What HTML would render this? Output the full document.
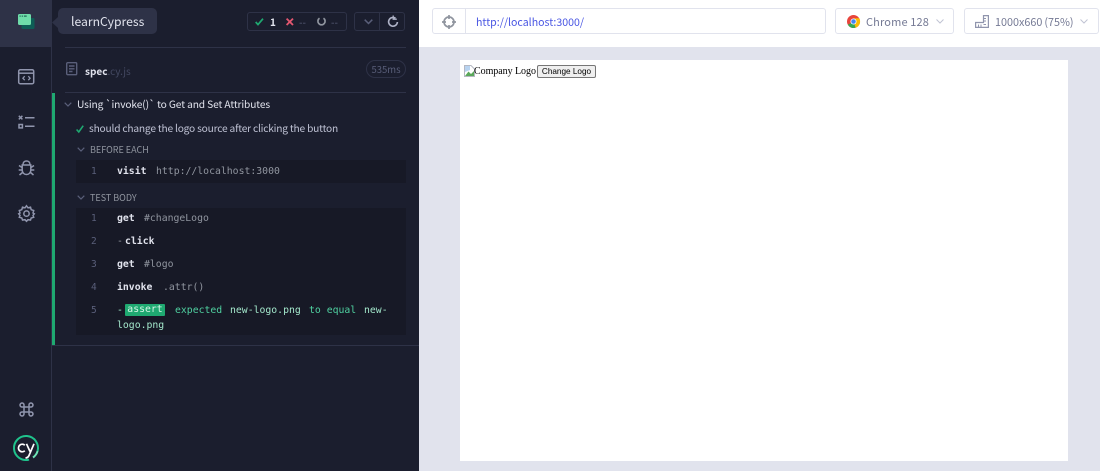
<!DOCTYPE html>
<html><head><meta charset="utf-8"><style>
html,body{margin:0;padding:0;width:1100px;height:471px;overflow:hidden;background:#fff}
*{box-sizing:border-box}
.a{position:absolute;white-space:nowrap}
body{font-family:"Noto Sans CJK SC","Liberation Sans",sans-serif;font-size:10.5px;position:relative}
.m{font-family:"DejaVu Sans Mono","Liberation Mono",monospace;font-size:9.8px;line-height:14px}
.b{font-weight:bold;color:#e1e3ed}
.g{color:#90959f}
.n{color:#5a5f7a;font-size:9.5px}
.gr{color:#a3e7cb}
svg{position:absolute;overflow:visible}
</style></head><body>
<!-- panels -->
<div class="a" style="left:0;top:0;width:419px;height:471px;background:#1b1e2e"></div>
<div class="a" style="left:0;top:0;width:52px;height:47px;background:#2e3247"></div>
<div class="a" style="left:51px;top:0;width:1px;height:471px;background:#2e3247"></div>
<div class="a" style="left:419px;top:47px;width:681px;height:424px;background:#e1e3ed"></div>
<div class="a" style="left:460px;top:60px;width:608px;height:401px;background:#fff"></div>

<!-- sidebar icons -->
<svg style="left:18px;top:14px" width="17" height="16"><rect x="3.5" y="4" width="13" height="11" rx="1.5" fill="#0e5d56"/><rect x="0" y="0" width="13" height="11" rx="1.5" fill="#6fdcaa"/><path d="M1.5 1.5h1.2v1.2h-1.2zM3.700 1.500h1.200v1.200h-1.200zM5.900 1.500h2.800v1.200h-2.800z" fill="#1f6b58"/></svg>
<svg style="left:18px;top:69px" width="17" height="16" fill="none" stroke="#9095ad" stroke-width="1.5"><rect x=".7" y=".7" width="15" height="14" rx="1.5"/><path d="M1 4.2H16"/><path d="M6.7 7.2L4.9 9.2 6.700 11.2M10.300 7.200L12.100 9.200 10.300 11.200" stroke-width="1.3"/></svg>
<svg style="left:18px;top:115px" width="17" height="16" fill="none" stroke="#9095ad" stroke-width="1.5"><path d="M.8 .8L4.400 4.400M4.400 .8L.8 4.400"/><rect x="1" y="9.500" width="3.400" height="3.400"/><path d="M7 2.700H16.500M7 11.200H16.500"/></svg>
<svg style="left:18px;top:159px" width="17" height="18" fill="none" stroke="#9095ad" stroke-width="1.5"><path d="M5 5.500C5 .8 12 .8 12 5.500"/><path d="M4.200 6H12.800V11C12.800 17 4.200 17 4.200 11Z"/><path d="M4 8.500L1 6.500M13 8.500L16 6.500M4 11H.7M13 11H16.300M4.500 13.500L1.500 16M12.500 13.500L15.500 16"/></svg>
<svg style="left:18px;top:205px" width="17" height="17" fill="none" stroke="#9095ad" stroke-width="1.5"><path d="M8.500 .8L10 2.800 12.500 2.200 13.200 4.700 15.700 5.500 15 8 16.300 8.700 15 10.500 15.700 12.300 13.200 13 12.500 15 10 14.700 8.500 16.300 7 14.700 4.500 15 3.800 13 1.300 12.300 2 10.500 .7 8.700 2 8 1.300 5.500 3.800 4.700 4.500 2.200 7 2.800Z"/><circle cx="8.500" cy="8.600" r="2.700"/></svg>
<svg style="left:19px;top:402px" width="15" height="15" fill="none" stroke="#9095ad" stroke-width="1.5"><path d="M5 5V2.800A2 2 0 1 0 2.800 5H12.200A2 2 0 1 0 10 2.800V12.200A2 2 0 1 0 12.200 10H2.800A2 2 0 1 0 5 12.200Z"/></svg>
<svg style="left:13px;top:435px" width="26" height="26" fill="none"><path d="M16 24.600A12 12 0 1 1 24.600 16" stroke="#1fc38c" stroke-width="2"/><path d="M24.600 16A12 12 0 0 1 20 22.500" stroke="#6fe3b6" stroke-width="2"/><path d="M11.800 10.200A3.800 3.800 0 1 0 11.800 15.800" stroke="#fff" stroke-width="1.700"/><path d="M13.500 8.800L17 16.500M21 8.800L16 20.500C15.400 22 14.200 22.800 12.500 23" stroke="#fff" stroke-width="1.700"/></svg>

<!-- tooltip -->
<svg style="left:52px;top:17px" width="6" height="11"><path d="M6 0V11L0 5.500Z" fill="#2e3247"/></svg>
<div class="a" style="left:58px;top:8px;width:99px;height:26px;border-radius:5px;background:#2e3247;color:#e1e3ed;font-size:12.200px;line-height:26px;padding-left:13px">learnCypress</div>

<!-- stats -->
<div class="a" style="left:247px;top:12px;width:100px;height:19px;border:1px solid #2e3247;border-radius:3px"></div>
<svg style="left:255px;top:18px" width="9" height="8" fill="none" stroke="#1fa971" stroke-width="1.700"><path d="M.7 4L3 6.600 8 .7"/></svg>
<div class="a" style="left:270px;top:14px;color:#e1e3ed;font-weight:bold;font-size:10px;line-height:15px">1</div>
<svg style="left:286px;top:18px" width="8" height="8" fill="none" stroke="#e45770" stroke-width="1.800"><path d="M.6 .6L7 7M7 .6L.6 7"/></svg>
<div class="a" style="left:299px;top:14px;color:#5a5f7a;font-size:10px;line-height:15px">--</div>
<svg style="left:317px;top:17px" width="9" height="9" fill="none" stroke="#90959f" stroke-width="1.700"><path d="M2.500 1.200A3.600 3.600 0 1 0 6.500 1.200"/></svg>
<div class="a" style="left:331px;top:14px;color:#5a5f7a;font-size:10px;line-height:15px">--</div>
<div class="a" style="left:354px;top:12px;width:51px;height:19px;border:1px solid #2e3247;border-radius:3px"></div>
<div class="a" style="left:379px;top:12px;width:1px;height:19px;background:#2e3247"></div>
<svg style="left:364px;top:19px" width="9" height="6" fill="none" stroke="#5a5f7a" stroke-width="1.500"><path d="M.7 .7L4.500 4.500 8.300 .7"/></svg>
<svg style="left:387px;top:15px" width="12" height="13" fill="none" stroke="#afb3c7" stroke-width="1.600"><path d="M8.500 3.200A4.400 4.400 0 1 0 10.400 7"/><path d="M6.200 .5V4.200H9.800" stroke-width="1.300"/></svg>

<!-- spec row -->
<div class="a" style="left:65px;top:47px;width:341px;height:1px;background:#2e3247"></div>
<svg style="left:66px;top:62px" width="12" height="14" fill="none" stroke="#5a5f7a" stroke-width="1.400"><rect x=".7" y=".7" width="10" height="12" rx="1"/><path d="M3 4H8.500M3 6.800H8.500M3 9.500H6.500"/></svg>
<div class="a" style="left:85px;top:63px;font-size:10px;line-height:16px;font-weight:bold;color:#e1e3ed">spec<span style="font-weight:normal;color:#434861">.cy.js</span></div>
<div class="a" style="left:366px;top:60px;width:40px;height:18px;border:1px solid #2e3247;border-radius:9px;color:#5a5f7a;font-size:9.500px;line-height:16px;text-align:center">535ms</div>
<div class="a" style="left:65px;top:92px;width:341px;height:1px;background:#2e3247"></div>

<!-- suite -->
<div class="a" style="left:52px;top:93px;width:3px;height:253px;background:#1fa971"></div>
<div class="a" style="left:52px;top:345px;width:367px;height:1px;background:#2e3247"></div>
<svg style="left:64px;top:102px" width="8" height="6" fill="none" stroke="#5a5f7a" stroke-width="1.200"><path d="M.7 .7L4 4 7.300 .7"/></svg>
<div class="a" style="left:77px;top:96px;color:#e1e3ed;font-size:10.200px;letter-spacing:-.12px;line-height:16px">Using `invoke()` to Get and Set Attributes</div>
<svg style="left:76px;top:125px" width="8" height="8" fill="none" stroke="#1fa971" stroke-width="1.600"><path d="M.6 4.500L2.800 7 7.200 .7"/></svg>
<div class="a" style="left:89px;top:120px;color:#bfc2d4;font-size:10.200px;letter-spacing:-.2px;line-height:16px">should change the logo source after clicking the button</div>

<svg style="left:77px;top:147px" width="8" height="6" fill="none" stroke="#5a5f7a" stroke-width="1.200"><path d="M.7 .7L4 4 7.300 .7"/></svg>
<div class="a" style="left:90px;top:142px;color:#90959f;font-size:9px;line-height:15px">BEFORE EACH</div>
<div class="a" style="left:76px;top:160px;width:330px;height:23px;background:#171926"></div>
<div class="a m n" style="left:91px;top:165px">1</div>
<div class="a m b" style="left:117px;top:165px">visit</div>
<div class="a m g" style="left:156px;top:165px">http://localhost:3000</div>

<svg style="left:77px;top:195px" width="8" height="6" fill="none" stroke="#5a5f7a" stroke-width="1.200"><path d="M.7 .7L4 4 7.300 .7"/></svg>
<div class="a" style="left:90px;top:190px;color:#90959f;font-size:9px;line-height:15px">TEST BODY</div>
<div class="a" style="left:76px;top:208px;width:330px;height:127px;background:#171926"></div>

<div class="a m n" style="left:91px;top:212px">1</div>
<div class="a m b" style="left:117px;top:212px">get</div>
<div class="a m g" style="left:144px;top:212px">#changeLogo</div>
<div class="a m n" style="left:91px;top:235px">2</div>
<div class="a m g" style="left:117px;top:235px">-</div>
<div class="a m b" style="left:125px;top:235px">click</div>
<div class="a m n" style="left:91px;top:258px">3</div>
<div class="a m b" style="left:117px;top:258px">get</div>
<div class="a m g" style="left:144px;top:258px">#logo</div>
<div class="a m n" style="left:91px;top:281px">4</div>
<div class="a m b" style="left:117px;top:281px">invoke</div>
<div class="a m g" style="left:163px;top:281px">.attr()</div>
<div class="a m n" style="left:91px;top:304px">5</div>
<div class="a m gr" style="left:117px;top:304px">-</div>
<div class="a m" style="left:125px;top:304px;width:40px;height:12px;background:#1fa971;border-radius:1px;line-height:12px;text-align:center;color:#d5f5e6">assert</div>
<div class="a m" style="left:175px;top:304px;color:#4fd0a0">expected</div>
<div class="a m gr" style="left:230px;top:304px">new-logo.png</div>
<div class="a m" style="left:309px;top:304px;color:#4fd0a0">to equal</div>
<div class="a m gr" style="left:364px;top:304px">new-</div>
<div class="a m gr" style="left:117px;top:319px">logo.png</div>

<!-- top bar -->
<div class="a" style="left:432px;top:8px;width:394px;height:26px;border:1px solid #e1e3ed;border-radius:3px"></div>
<div class="a" style="left:465px;top:8px;width:1px;height:26px;background:#e1e3ed"></div>
<svg style="left:442px;top:15px" width="14" height="14" fill="none" stroke="#90959f" stroke-width="1.700"><circle cx="7" cy="7" r="5"/><path d="M7 0V4M7 10V14M0 7H4M10 7H14"/></svg>
<div class="a" style="left:476px;top:15px;color:#4956e3;font-size:10.600px;line-height:15px">http://localhost:3000/</div>

<div class="a" style="left:835px;top:8px;width:119px;height:26px;border:1px solid #e1e3ed;border-radius:3px"></div>
<svg style="left:847px;top:15px" width="13" height="13" viewBox="0 0 12 12"><circle cx="6" cy="6" r="6" fill="#e8453c"/><path d="M6 6L.8 9A6 6 0 0 0 8 11.700Z" fill="#34a853"/><path d="M6 3H11.300A6 6 0 0 1 8 11.700L6 6Z" fill="#fbbc05"/><circle cx="6" cy="6" r="2.800" fill="#fff"/><circle cx="6" cy="6" r="2.100" fill="#4285f4"/></svg>
<div class="a" style="left:866px;top:15px;color:#747994;font-size:11px;line-height:15px;letter-spacing:.15px">Chrome 128</div>
<svg style="left:936px;top:19px" width="8" height="5" fill="none" stroke="#c0c3d3" stroke-width="1"><path d="M.5 .5L4 4 7.500 .5"/></svg>

<div class="a" style="left:964px;top:8px;width:135px;height:26px;border:1px solid #e1e3ed;border-radius:3px"></div>
<svg style="left:975px;top:15px" width="14" height="13" fill="none" stroke="#9095ad" stroke-width="1.200"><path d="M.6 12.400V7.500H8.500V.6H13.400V12.400Z"/><path d="M3.500 9.500V12M6 9.500V12M8.500 9.500H11M8.500 6H11M8.500 3.500H11" stroke-width="1"/></svg>
<div class="a" style="left:995px;top:15px;color:#747994;font-size:10.800px;line-height:15px">1000x660<span style="margin-left:2px">(75%)</span></div>
<svg style="left:1080px;top:19px" width="8" height="5" fill="none" stroke="#c0c3d3" stroke-width="1"><path d="M.5 .5L4 4 7.500 .5"/></svg>

<!-- AUT content -->
<svg style="left:464px;top:65px" width="11" height="12"><path d="M.5 .5H7L10.500 4V11.500H.5Z" fill="#fff" stroke="#b5b8c2"/><path d="M1 11L4.500 6.500 7 9 10 6V11Z" fill="#5aa85a"/><path d="M1 1H6V5L1 7Z" fill="#b8d3f0"/></svg>
<div class="a" style="left:474px;top:64px;font-family:'Liberation Serif',serif;font-size:10px;letter-spacing:-.05px;line-height:15px;color:#000">Company Logo</div>
<div class="a" style="left:537px;top:65px;width:59px;height:13px;border:1px solid #767676;border-radius:2px;background:#efefef;font-family:'Liberation Sans',sans-serif;font-size:8.200px;line-height:11px;text-align:center;color:#000">Change Logo</div>
</body></html>
